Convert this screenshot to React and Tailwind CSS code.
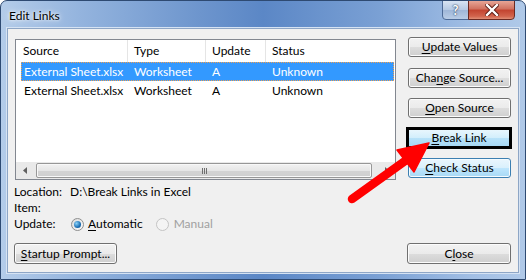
import React from 'react';

const FONT = "font-['Segoe_UI','Lato','Liberation_Sans',sans-serif]";

const BTN_BASE = 'flex items-center justify-center rounded-[3px] border text-black whitespace-nowrap';
const BTN_NORMAL =
  'border-[#707070] bg-[linear-gradient(#f2f2f2_0%,#ebebeb_50%,#dddddd_51%,#cfcfcf_100%)] shadow-[inset_0_0_0_1px_#fcfcfc]';
const BTN_HOT =
  'border-[#3c7fb1] bg-[linear-gradient(#eaf6fd_0%,#d9f0fc_50%,#bee6fd_51%,#a7d9f5_100%)] shadow-[inset_0_0_0_1px_#f4fbff]';

const Btn = ({ children, hot, className = '' }) => (
  <div className={`${BTN_BASE} ${hot ? BTN_HOT : BTN_NORMAL} ${className}`}>{children}</div>
);

const U = ({ children }) => <span className="underline underline-offset-[2px] decoration-1">{children}</span>;

const Radio = ({ checked, disabled }) => (
  <span
    className={`inline-flex items-center justify-center w-[13px] h-[13px] rounded-full border ${
      disabled ? 'border-[#c4c4c4] bg-[#f4f4f4]' : 'border-[#8e8f8f] bg-[linear-gradient(135deg,#dcdcdc,#fbfbfb)]'
    }`}
  >
    {checked && (
      <span className="w-[7px] h-[7px] rounded-full bg-[radial-gradient(circle_at_35%_35%,#8ad2f8,#1c6fb4_60%,#0d4a87)]" />
    )}
  </span>
);

const Row = ({ selected }) => (
  <div
    className={`ml-[5px] mr-px h-[19px] flex items-center whitespace-nowrap border ${
      selected ? 'bg-[#3399ff] text-white border-dotted border-[#f0a050]' : 'border-transparent'
    }`}
  >
    <div className="w-[106px] pl-[2px]">External Sheet.xlsx</div>
    <div className="w-[78px] pl-[6px]">Worksheet</div>
    <div className="w-[60px] pl-[6px]">A</div>
    <div className="flex-1 pl-[6px]">Unknown</div>
  </div>
);

export default function App() {
  return (
    <div className={`w-[526px] h-[280px] bg-white text-[12px] leading-none text-black ${FONT}`}>
      <div className="relative w-full h-full rounded-t-[7px] border border-[#2e4a72] bg-[linear-gradient(90deg,#b4cce9_0%,#94b4de_15%,#6d95cd_38%,#5b87c6_50%,#7aa0d4_72%,#a2bfe5_90%,#b0c9e8_100%)] flex flex-col overflow-hidden">
        {/* title bar */}
        <div className="h-[27px] flex items-start shrink-0">
          <div className="pl-[8px] pt-[9px] text-[12px] [text-shadow:0_0_6px_#ffffff,0_0_3px_#ffffff]">Edit Links</div>
          <div className="ml-auto mr-[10px] flex">
            <div className="w-[27px] h-[20px] -mt-px rounded-bl-[4px] border border-[#4c6a96] bg-[linear-gradient(#d8e4f3,#b5c9e3_50%,#9fb7d8_51%,#b9cde6)] flex items-center justify-center text-white font-bold text-[13px] [text-shadow:0_0_2px_#2c3f5c,0_0_1px_#2c3f5c]">
              ?
            </div>
            <div className="w-[47px] h-[20px] -mt-px -ml-px rounded-br-[4px] border border-[#6b2a22] bg-[linear-gradient(#e7a596,#d0705e_45%,#c2432f_50%,#d2644d_85%,#e09078)] flex items-center justify-center">
              <svg width="14" height="12" viewBox="0 0 14 12">
                <path d="M2 1 L12 11 M12 1 L2 11" stroke="#5a1a12" strokeWidth="4.2" strokeLinecap="square" />
                <path d="M2 1 L12 11 M12 1 L2 11" stroke="#ffffff" strokeWidth="2.4" strokeLinecap="square" />
              </svg>
            </div>
          </div>
        </div>

        {/* client area */}
        <div className="flex-1 mx-[6px] mb-[6px] border border-[#8ea6c6] shadow-[0_0_0_1px_#d6e3f3] bg-[#f0f0f0] flex flex-col pl-[6px] pr-[7px] pt-[8px] pb-[8px]">
          <div className="flex">
            {/* left column */}
            <div className="flex flex-col">
              <div className="mt-[2px] ml-px w-[381px] h-[141px] border border-[#828790] bg-white flex flex-col">
                <div className="h-[22px] flex items-center">
                  <div className="w-[112px] h-full flex items-center pl-[7px] border-r border-[#e5e5e5]">Source</div>
                  <div className="w-[78px] h-full flex items-center pl-[6px] border-r border-[#e5e5e5]">Type</div>
                  <div className="w-[60px] h-full flex items-center pl-[6px] border-r border-[#e5e5e5]">Update</div>
                  <div className="flex-1 h-full flex items-center pl-[6px]">Status</div>
                </div>
                <Row selected />
                <Row />
                {/* scrollbar */}
                <div className="mt-auto h-[17px] bg-[#e9e9e9] flex items-center">
                  <div className="w-[17px] h-full flex items-center justify-center">
                    <svg width="4" height="7" viewBox="0 0 4 7"><path d="M4 0 L0 3.5 L4 7 Z" fill="#606060" /></svg>
                  </div>
                  <div className="ml-[3px] w-[336px] h-[15px] rounded-[2px] border border-[#979797] bg-[linear-gradient(#f2f2f2,#e6e6e6_50%,#d4d4d4_51%,#cfcfcf)] shadow-[inset_0_0_0_1px_#f8f8f8] flex items-center justify-center">
                    <div className="flex gap-[1px]">
                      <div className="w-[1px] h-[6px] bg-[#6e6e6e]" />
                      <div className="w-[1px] h-[6px] bg-[#6e6e6e]" />
                      <div className="w-[1px] h-[6px] bg-[#6e6e6e]" />
                    </div>
                  </div>
                  <div className="ml-auto w-[17px] h-full flex items-center justify-center">
                    <svg width="4" height="7" viewBox="0 0 4 7"><path d="M0 0 L4 3.5 L0 7 Z" fill="#606060" /></svg>
                  </div>
                </div>
              </div>

              {/* info lines */}
              <div className="mt-[4px] flex flex-col whitespace-nowrap">
                <div className="h-[16px] flex items-center">
                  <span className="w-[56px]">Location:</span>
                  <span>D:\Break Links in Excel</span>
                </div>
                <div className="h-[16px] flex items-center">
                  <span className="w-[56px]">Item:</span>
                </div>
                <div className="h-[16px] flex items-center">
                  <span className="w-[57px]">Update:</span>
                  <Radio checked />
                  <span className="ml-[4px]"><U>A</U>utomatic</span>
                  <span className="ml-[13px] flex"><Radio disabled /></span>
                  <span className="ml-[5px] text-[#a0a0a0]">Manual</span>
                </div>
              </div>
            </div>

            {/* right column buttons */}
            <div className="ml-[12px] w-[103px] flex flex-col">
              <Btn className="h-[20px]"><U>U</U>pdate Values</Btn>
              <Btn className="h-[20px] mt-[11px]">Cha<U>n</U>ge Source...</Btn>
              <Btn className="h-[20px] mt-[10px]"><U>O</U>pen Source</Btn>
              <div className="mt-[9px] -ml-[2px] w-[106px] h-[22px] border-[3px] border-black bg-[linear-gradient(#e8f6fd,#d2eefc_50%,#b8e2f9_51%,#a6d8f4)] flex items-center justify-center whitespace-nowrap">
                <U>B</U>reak Link
              </div>
              <Btn hot className="h-[20px] mt-[9px]">
                <U>C</U>heck Status
              </Btn>
            </div>
          </div>

          {/* bottom row */}
          <div className="mt-auto flex justify-between">
            <Btn className="w-[103px] h-[21px]"><U>S</U>tartup Prompt...</Btn>
            <Btn className="w-[104px] h-[21px]">C<U>l</U>ose</Btn>
          </div>
        </div>

        {/* red annotation arrow */}
        <svg className="absolute left-0 top-0 pointer-events-none" width="526" height="280" viewBox="0 0 526 280">
          <line x1="351" y1="198" x2="404" y2="160" stroke="#ff0000" strokeWidth="8.5" strokeLinecap="round" />
          <path d="M428 142 L396 149 L413 171 Z" fill="#ff0000" stroke="#ff0000" strokeWidth="1.5" strokeLinejoin="round" />
        </svg>
      </div>
    </div>
  );
}
